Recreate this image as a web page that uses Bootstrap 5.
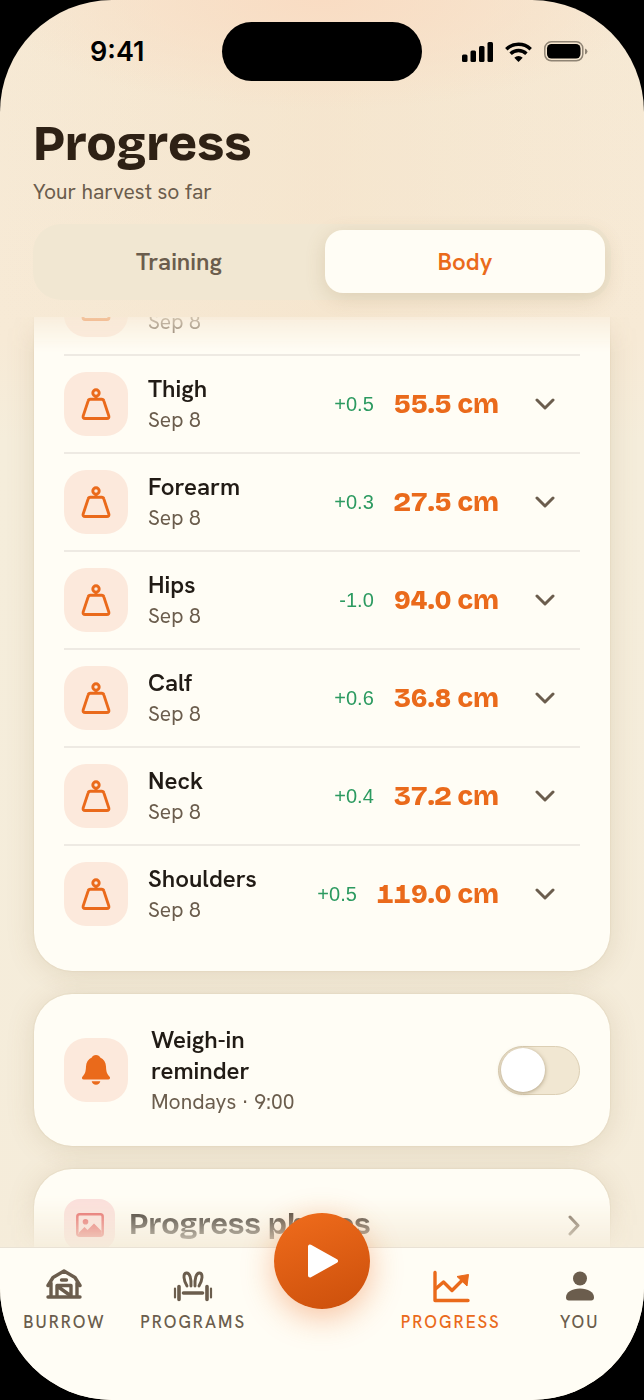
<!DOCTYPE html>
<html lang="en">
<head>
<meta charset="utf-8">
<meta name="viewport" content="width=device-width, initial-scale=1">
<title>Progress</title>
<link href="https://cdn.jsdelivr.net/npm/bootstrap@5.3.0/dist/css/bootstrap.min.css" rel="stylesheet">
<style>
  :root {
    --ink: #2e2115;
    --soft: #6b5d4d;
    --accent: #ea6a1b;
    --surface: #fffdf5;
    --tile: #fce9dc;
    --rule: #eeeae3;
    --display: "Bricolage Grotesque", Inter, "Liberation Sans", sans-serif;
  }
  body { background: #000; font-family: "Hanken Grotesk", Lato, "Liberation Sans", sans-serif; color: var(--soft); }
  svg { display: block; flex: none; }
  .screen {
    height: 100vh; overflow: hidden; border-radius: 112px;
    background:
      radial-gradient(ellipse 330px 110px at 50% 0, #f9dcc3 0, #f9dcc300 100%),
      linear-gradient(90deg, #f4e2c800 0, #f4e2c880 50%, #f4e2c800 100%) 0 0 / 100% 320px no-repeat,
      linear-gradient(#f6e9d4, #f7ead6 340px, #f5eddb 440px, #f5ecda);
  }
  .statusbar { display: grid; grid-template-columns: 1fr 200px 1fr; align-items: center; padding-top: 22px; color: #000; }
  .clock { font: 600 27px/32px Inter, "Liberation Sans", sans-serif; padding-left: 90px; }
  .island { height: 59px; border-radius: 30px; background: #000; }
  .signals { padding-left: 40px; gap: 12px; }
  .page-head { padding: 35px 33px 0; }
  .page-title { font: 800 49px/56px var(--display); color: var(--ink); }
  .page-sub { font-size: 21px; line-height: 28px; margin-top: 6px; }
  .segments { margin-top: 18px; padding: 6px; gap: 6px; height: 76px; border-radius: 28px; background: #f1e7d2; }
  .segments .btn { flex: 1 1 0; border: 0; border-radius: 18px; font-size: 24px; font-weight: 600; color: var(--soft); height: 63px; }
  .segments .btn.active { background: var(--surface); color: var(--accent); box-shadow: 0 5px 20px #8a6a3530; }
  .scroller {
    min-height: 0; overflow: hidden; margin-top: 17px; padding: 0 34px; gap: 23px;
    -webkit-mask-image: linear-gradient(#0004, #000 36px, #000 calc(100% - 52px), #0002);
    mask-image: linear-gradient(#0004, #000 36px, #000 calc(100% - 52px), #0002);
  }
  .panel { flex: none; background: var(--surface); border-radius: 38px; padding: 30px; box-shadow: 0 3px 28px #8a6d3a2b, 0 0 2px #8a6d3a30; }
  .panel-cont { padding-top: 0; padding-bottom: 29px; border-top-left-radius: 0; border-top-right-radius: 0; }
  .measure { height: 98px; border-top: 2px solid var(--rule); gap: 20px; }
  .measure-cut { height: 37px; border: 0; align-items: flex-end; padding-bottom: 17px; }
  .tile { flex: none; width: 64px; height: 64px; border-radius: 22px; background: var(--tile); color: var(--accent); }
  .tile-sm { width: 51px; height: 51px; border-radius: 16px; background: #fbdedb; color: #e4595a; }
  .label { font-size: 24px; line-height: 31px; font-weight: 600; color: #211b15; }
  .sub { font-size: 21px; line-height: 31px; }
  .delta { font: 400 20px/31px "Liberation Sans", sans-serif; color: #2c9a60; }
  .amount { font: 800 27px/31px var(--display); font-variant-numeric: tabular-nums; color: var(--accent); white-space: nowrap; }
  .expand { width: 52px; height: 52px; margin: 0 9px 0 0; border: 0; background: none; color: var(--soft); }
  .reminder { gap: 23px; height: 152px; }
  .reminder-text { width: 150px; }
  .toggle {
    appearance: none; margin: 0; flex: none; display: flex; align-items: center; width: 82px; height: 49px; padding: 2px;
    border: 1px solid #dccfb4; border-radius: 25px; background: #f1e7d2;
  }
  .toggle::before { content: ""; width: 44px; height: 44px; border-radius: 50%; background: #fff; box-shadow: 0 1px 4px #6b552e80; }
  .toggle:checked { justify-content: flex-end; background: var(--accent); }
  .photos { height: 130px; padding-bottom: 0; gap: 14px; color: #211b15; }
  .photos-title { font: 700 30px/51px var(--display); }
  .tabs { height: 153px; background: var(--surface); border-top: 1px solid #e9e2d5; }
  .tab { flex: 1 1 0; min-width: 0; padding-top: 20px; color: var(--soft); font-size: 17px; line-height: 24px; font-weight: 500; letter-spacing: 2px; text-decoration: none; gap: 6px; }
  .tab.active { color: var(--accent); }
  .fab-slot { flex: 1 1 0; min-width: 0; }
  .fab {
    width: 96px; height: 96px; margin-top: -35px; border: 0; border-radius: 50%; color: #fff;
    background: linear-gradient(160deg, #f06c1c, #cb4f0b); box-shadow: 0 8px 32px #ea6a1b66;
  }
</style>
</head>
<body>
<svg class="d-none" aria-hidden="true">
  <symbol id="weight" viewBox="0 0 32 32"><g fill="none" stroke="currentColor" stroke-width="2.900" stroke-linejoin="round"><circle cx="16" cy="5" r="3.200"/><path d="M16 8.200v3M10.300 11.300h11.400q1.700 0 2.200 1.800l4.900 14.800q.7 2.600-2 2.600H5.200q-2.700 0-2-2.600L8.100 13.100q.5-1.800 2.200-1.800z"/></g></symbol>
  <symbol id="chev" viewBox="0 0 20 12"><path d="M2 2l8 8 8-8" fill="none" stroke="currentColor" stroke-width="3" stroke-linecap="round" stroke-linejoin="round"/></symbol>
</svg>

<div class="screen d-flex flex-column">
  <div class="statusbar">
    <div class="clock">9:41</div>
    <div class="island"></div>
    <div class="signals d-flex align-items-center">
      <svg width="31" height="20" viewBox="0 0 31 20"><rect y="12.500" width="5.500" height="7.500" rx="1.500"/><rect x="8.500" y="8.500" width="5.500" height="11.500" rx="1.500"/><rect x="17" y="4" width="5.500" height="16" rx="1.500"/><rect x="25.500" width="5.500" height="20" rx="1.500"/></svg>
      <svg width="27" height="20" viewBox="0 0 27 20"><g fill="none" stroke="#000" stroke-width="3.500"><path d="M1.300 7.200a17.500 17.500 0 0 1 24.400 0"/><path d="M5.600 11.700a11.500 11.500 0 0 1 15.800 0"/></g><path d="M13.500 20l-4.200-4.200a6 6 0 0 1 8.400 0z"/></svg>
      <svg width="44" height="21" viewBox="0 0 44 21"><rect x=".8" y=".8" width="38" height="19" rx="6.500" fill="none" stroke="#8f8474" stroke-width="1.500"/><rect x="3" y="3" width="33.500" height="14.600" rx="4.500"/><path d="M41 7.500q2.500 1 2.500 3t-2.500 3z" fill="#8f8474"/></svg>
    </div>
  </div>

  <header class="page-head">
    <h1 class="page-title mb-0">Progress</h1>
    <p class="page-sub mb-0">Your harvest so far</p>
    <div class="segments d-flex">
      <button type="button" class="btn p-0">Training</button>
      <button type="button" class="btn p-0 active">Body</button>
    </div>
  </header>

  <main class="scroller flex-grow-1 d-flex flex-column">
    <section class="panel panel-cont">
      <div class="measure measure-cut d-flex">
        <div class="tile d-flex align-items-center justify-content-center"><svg width="32" height="32"><use href="#weight"/></svg></div>
        <div class="sub">Sep 8</div>
      </div>
      <div class="measure d-flex align-items-center">
        <div class="tile d-flex align-items-center justify-content-center"><svg width="32" height="32"><use href="#weight"/></svg></div>
        <div class="flex-grow-1"><div class="label">Thigh</div><div class="sub">Sep 8</div></div>
        <div class="delta">+0.5</div><div class="amount">55.5 cm</div>
        <button type="button" class="expand d-flex align-items-center justify-content-center p-0" aria-label="Expand Thigh"><svg width="20" height="12"><use href="#chev"/></svg></button>
      </div>
      <div class="measure d-flex align-items-center">
        <div class="tile d-flex align-items-center justify-content-center"><svg width="32" height="32"><use href="#weight"/></svg></div>
        <div class="flex-grow-1"><div class="label">Forearm</div><div class="sub">Sep 8</div></div>
        <div class="delta">+0.3</div><div class="amount">27.5 cm</div>
        <button type="button" class="expand d-flex align-items-center justify-content-center p-0" aria-label="Expand Forearm"><svg width="20" height="12"><use href="#chev"/></svg></button>
      </div>
      <div class="measure d-flex align-items-center">
        <div class="tile d-flex align-items-center justify-content-center"><svg width="32" height="32"><use href="#weight"/></svg></div>
        <div class="flex-grow-1"><div class="label">Hips</div><div class="sub">Sep 8</div></div>
        <div class="delta">-1.0</div><div class="amount">94.0 cm</div>
        <button type="button" class="expand d-flex align-items-center justify-content-center p-0" aria-label="Expand Hips"><svg width="20" height="12"><use href="#chev"/></svg></button>
      </div>
      <div class="measure d-flex align-items-center">
        <div class="tile d-flex align-items-center justify-content-center"><svg width="32" height="32"><use href="#weight"/></svg></div>
        <div class="flex-grow-1"><div class="label">Calf</div><div class="sub">Sep 8</div></div>
        <div class="delta">+0.6</div><div class="amount">36.8 cm</div>
        <button type="button" class="expand d-flex align-items-center justify-content-center p-0" aria-label="Expand Calf"><svg width="20" height="12"><use href="#chev"/></svg></button>
      </div>
      <div class="measure d-flex align-items-center">
        <div class="tile d-flex align-items-center justify-content-center"><svg width="32" height="32"><use href="#weight"/></svg></div>
        <div class="flex-grow-1"><div class="label">Neck</div><div class="sub">Sep 8</div></div>
        <div class="delta">+0.4</div><div class="amount">37.2 cm</div>
        <button type="button" class="expand d-flex align-items-center justify-content-center p-0" aria-label="Expand Neck"><svg width="20" height="12"><use href="#chev"/></svg></button>
      </div>
      <div class="measure d-flex align-items-center">
        <div class="tile d-flex align-items-center justify-content-center"><svg width="32" height="32"><use href="#weight"/></svg></div>
        <div class="flex-grow-1"><div class="label">Shoulders</div><div class="sub">Sep 8</div></div>
        <div class="delta">+0.5</div><div class="amount">119.0 cm</div>
        <button type="button" class="expand d-flex align-items-center justify-content-center p-0" aria-label="Expand Shoulders"><svg width="20" height="12"><use href="#chev"/></svg></button>
      </div>
    </section>

    <section class="panel reminder d-flex align-items-center">
      <div class="tile d-flex align-items-center justify-content-center">
        <svg width="32" height="32" viewBox="0 0 32 32" fill="currentColor"><path d="M16 1c2.200 0 3.600 1.100 4.200 2.600 3.600 1.600 5.600 4.800 5.800 8.900.2 5.200.9 7.300 3.400 9.900 1.300 1.400.6 3.100-1.200 3.100H3.800c-1.800 0-2.500-1.700-1.200-3.100C5.100 19.800 5.800 17.700 6 12.500c.2-4.100 2.200-7.300 5.800-8.900C12.400 2.100 13.800 1 16 1zM11.700 27.300h8.600a4.400 4.400 0 0 1-8.600 0z"/></svg>
      </div>
      <label for="weighin" class="reminder-text me-auto"><span class="label d-block">Weigh-in reminder</span><span class="sub d-block text-nowrap">Mondays · 9:00</span></label>
      <input id="weighin" class="toggle" type="checkbox" role="switch">
    </section>

    <section class="panel photos d-flex align-items-start">
      <div class="tile tile-sm d-flex align-items-center justify-content-center">
        <svg width="28" height="24" viewBox="0 0 28 24"><rect x="1.300" y="1.300" width="25.400" height="21.400" rx="2.500" fill="none" stroke="currentColor" stroke-width="2.500"/><circle cx="9.500" cy="8.800" r="2.800" fill="currentColor"/><path d="M3 19.500l5.500-5.500 3 3 6.500-6.500 7.500 7.500v4H3z" fill="currentColor"/></svg>
      </div>
      <h2 class="photos-title mb-0 me-auto">Progress photos</h2>
      <svg width="12" height="51" viewBox="0 0 12 51"><path d="M2 18l8 8.500L2 35" fill="none" stroke="#6b5d4d" stroke-width="3" stroke-linecap="round" stroke-linejoin="round"/></svg>
    </section>
  </main>

  <nav class="tabs d-flex flex-shrink-0 position-relative">
    <a href="#burrow" class="tab d-flex flex-column align-items-center">
      <svg width="36" height="36" viewBox="0 0 36 36"><g fill="none" stroke="currentColor" stroke-width="3.400" stroke-linecap="round" stroke-linejoin="round"><path d="M2 17.500L7 9.500 18 3l11 6.500L34 17.500M5 15v13M31 15v13M2 29h32"/><path d="M15.500 12h5"/><path d="M11 28V17.500h14V28M11 18l14 10" stroke-linecap="butt"/></g></svg>
      <span>BURROW</span>
    </a>
    <a href="#programs" class="tab d-flex flex-column align-items-center">
      <svg width="40" height="36" viewBox="0 0 40 36"><g fill="none" stroke="currentColor" stroke-linecap="round"><path d="M2 20.500v9M38 20.500v9" stroke-width="2.200"/><path d="M6 18.500v13M34 18.500v13" stroke-width="3.600"/><path d="M10.500 25h19" stroke-width="3.600"/><path d="M14 18C10.300 12 9.900 5.500 13.300 5c3.800-.4 5 6 4.700 13M22 18C21.700 11 22.900 4.600 26.700 5c3.400.5 3 7-.7 13" stroke-width="2.900"/></g></svg>
      <span>PROGRAMS</span>
    </a>
    <div class="fab-slot">
      <button type="button" class="fab d-flex align-items-center justify-content-center p-0 mx-auto" aria-label="Start workout">
        <svg width="34" height="36" viewBox="0 0 34 36"><path d="M5 3.500v29L31 18z" fill="#fff" stroke="#fff" stroke-width="4" stroke-linejoin="round"/></svg>
      </button>
    </div>
    <a href="#progress" class="tab active d-flex flex-column align-items-center" aria-current="page">
      <svg width="38" height="36" viewBox="0 0 38 36"><g fill="none" stroke="currentColor" stroke-width="3.400" stroke-linecap="round" stroke-linejoin="round"><path d="M3 4.500v28h33"/><path d="M4 20.500l7.500-6.500 8.500 8.500L31 11.500"/></g><path d="M25 8.500L36.500 6.500l-1.500 11.500z" fill="currentColor" stroke="currentColor" stroke-linejoin="round"/></svg>
      <span>PROGRESS</span>
    </a>
    <a href="#you" class="tab d-flex flex-column align-items-center">
      <svg width="32" height="36" viewBox="0 0 32 36" fill="currentColor"><circle cx="16" cy="10.500" r="7"/><path d="M2 29.500C2 24 8 20.500 16 20.500s14 3.500 14 9c0 2-1 3-2.800 3H4.800C3 32.500 2 31.500 2 29.500z"/></svg>
      <span>YOU</span>
    </a>
  </nav>
</div>
<script src="https://cdn.jsdelivr.net/npm/bootstrap@5.3.0/dist/js/bootstrap.bundle.min.js"></script>
</body>
</html>
